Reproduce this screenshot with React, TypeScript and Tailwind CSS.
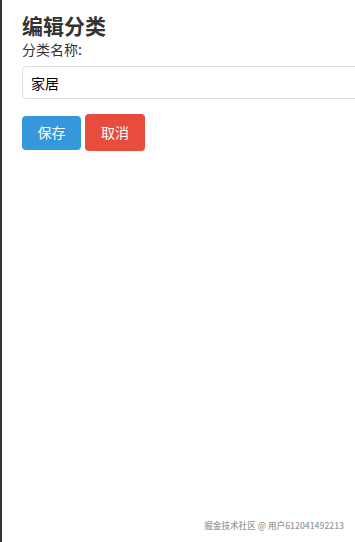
export default function App() {
  return (
    <div
      className="relative h-[542px] w-[355px] overflow-hidden border-l-2 border-[#333] bg-white text-[#333]"
      style={{ fontFamily: '"Microsoft YaHei", "Noto Sans CJK SC", sans-serif' }}
    >
      <div className="pl-5 pt-[11px]">
        <h2 className="text-[21px] font-bold leading-[28px]">编辑分类</h2>
        <label className="block text-[14px] leading-[20px]">分类名称:</label>
        <input
          defaultValue="家居"
          className="mt-[7px] h-[33px] w-[400px] rounded-[4px] border border-[#ddd] px-2 text-[14px] text-black outline-none"
        />
        <div className="mt-[15px] flex items-center gap-1">
          <button className="h-[34px] w-[59px] rounded-[4px] bg-[#3498db] text-[14px] text-white">
            保存
          </button>
          <button className="h-[37px] w-[60px] rounded-[4px] bg-[#e74c3c] text-[14px] text-white">
            取消
          </button>
        </div>
      </div>
      <div className="absolute bottom-[12px] right-[11px] text-[8.6px] font-medium leading-none text-[#999]">
        掘金技术社区 @ 用户612041492213
      </div>
    </div>
  );
}
